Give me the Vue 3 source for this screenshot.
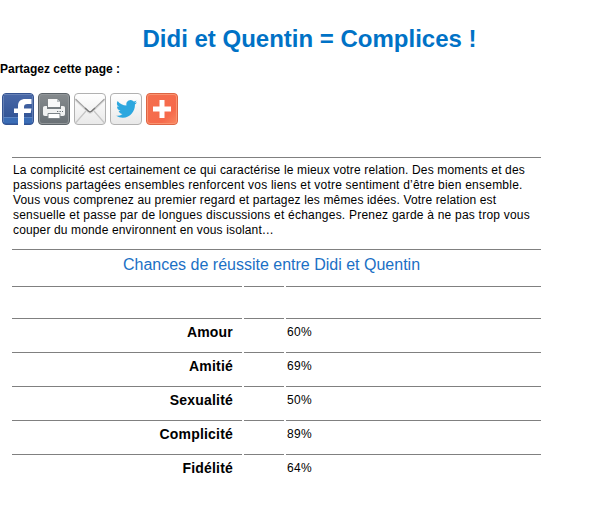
<template>
  <div class="page">
    <h1 class="title">Didi et Quentin = Complices !</h1>

    <p class="share-label">Partagez cette page :</p>

    <div class="share-list">
      <!-- Facebook -->
      <a class="share" aria-label="Facebook">
        <svg viewBox="0 0 32 32">
          <defs>
            <linearGradient id="fb" x1="0" y1="0" x2="0" y2="1">
              <stop offset="0" stop-color="#4a69a8" />
              <stop offset="1" stop-color="#2c4f91" />
            </linearGradient>
          </defs>
          <rect x="0.5" y="0.5" width="31" height="31" rx="3.5" fill="url(#fb)" stroke="#345391" />
          <rect x="1.5" y="24" width="29" height="6.5" rx="1" fill="#3a6cb5" />
          <path d="M1.5 24.5H30.5" stroke="#5a83c2" />
          <path d="M2 1.5H30M1.5 3V29M30.5 3V29" stroke="#7890bf" opacity="0.65" fill="none" />
          <path d="M16 32V20H12V15.5H16V13C16 8.6 18.6 6 23.5 6H29.5V11H25.5C23 11 22 12 22 14V15.5H29.5L28.7 20H22V32Z" fill="#fff" />
        </svg>
      </a>

      <!-- Imprimer -->
      <a class="share" aria-label="Imprimer">
        <svg viewBox="0 0 32 32">
          <defs>
            <linearGradient id="print" x1="0" y1="0" x2="0" y2="1">
              <stop offset="0" stop-color="#868b8e" />
              <stop offset="1" stop-color="#686f74" />
            </linearGradient>
          </defs>
          <rect x="0.5" y="0.5" width="31" height="31" rx="3.5" fill="url(#print)" stroke="#5c6368" />
          <rect x="1.5" y="1.5" width="29" height="29" rx="2.5" fill="none" stroke="#92979a" />
          <path d="M10 14V6H19L22 9V14Z" fill="#f8f8f8" />
          <path d="M19 6V9H22" fill="#b8bdc0" />
          <path d="M7 13H9V16H23V13H25C26.5 13 27 13.8 27 15V21C27 22.3 26.4 23 25 23H7C5.6 23 5 22.3 5 21V15C5 13.8 5.7 13 7 13Z" fill="#f1f2f2" />
          <path d="M19 18.5H20.3M21.5 18.5H22.8M24 18.5H25" stroke="#687075" />
          <path d="M10 20.5H22V25.5H10Z" fill="#fff" stroke="#7d8488" />
        </svg>
      </a>

      <!-- Email -->
      <a class="share" aria-label="Email">
        <svg viewBox="0 0 32 32">
          <defs>
            <linearGradient id="mail" x1="0" y1="0" x2="0" y2="1">
              <stop offset="0" stop-color="#fff" />
              <stop offset="1" stop-color="#e9e9e9" />
            </linearGradient>
          </defs>
          <rect x="0.5" y="0.5" width="31" height="31" rx="3.5" fill="url(#mail)" stroke="#b1b1b1" />
          <path d="M1.5 30L12 18M30.5 30L20 18" stroke="#c6c6c6" stroke-width="1.2" />
          <path d="M1.5 7L14.5 19.3Q16 20.5 17.5 19.3L30.5 7" fill="none" stroke="#dedede" stroke-width="2" />
          <path d="M1.5 6L14.5 18.3Q16 19.5 17.5 18.3L30.5 6" fill="none" stroke="#a2a2a2" stroke-width="1.1" />
          <path d="M11 15L14.5 18.3Q16 19.5 17.5 18.3L21 15" fill="none" stroke="#777" stroke-width="1.3" />
        </svg>
      </a>

      <!-- Twitter -->
      <a class="share" aria-label="Twitter">
        <svg viewBox="0 0 32 32">
          <defs>
            <linearGradient id="tw" x1="0" y1="0" x2="0" y2="1">
              <stop offset="0" stop-color="#fff" />
              <stop offset="1" stop-color="#e8e8e8" />
            </linearGradient>
          </defs>
          <rect x="0.5" y="0.5" width="31" height="31" rx="3.5" fill="url(#tw)" stroke="#b1b1b1" />
          <path
            transform="translate(6.2 5) scale(0.87 0.91)"
            d="M23.95 4.57a10 10 0 0 1-2.82.78 4.96 4.96 0 0 0 2.16-2.72 9.9 9.9 0 0 1-3.12 1.19 4.92 4.92 0 0 0-8.39 4.48A13.98 13.98 0 0 1 1.64 3.16a4.9 4.9 0 0 0 1.52 6.57 4.9 4.9 0 0 1-2.23-.61v.06a4.92 4.92 0 0 0 3.95 4.83 5 5 0 0 1-2.21.08 4.94 4.94 0 0 0 4.6 3.42A9.87 9.87 0 0 1 0 19.54a13.94 13.94 0 0 0 7.55 2.21c9.05 0 14-7.5 14-13.98 0-.21 0-.42-.02-.63a9.94 9.94 0 0 0 2.42-2.57z"
            fill="#2ca7df"
          />
        </svg>
      </a>

      <!-- Plus -->
      <a class="share" aria-label="Plus">
        <svg viewBox="0 0 32 32">
          <defs>
            <linearGradient id="plus" x1="0" y1="0" x2="1" y2="1">
              <stop offset="0" stop-color="#f4704f" />
              <stop offset="0.7" stop-color="#f66a4b" />
              <stop offset="1" stop-color="#f98a62" />
            </linearGradient>
          </defs>
          <rect x="0.5" y="0.5" width="31" height="31" rx="3.5" fill="url(#plus)" stroke="#dc6544" />
          <rect x="1.5" y="1.5" width="29" height="29" rx="2.5" fill="none" stroke="#fb9370" />
          <path d="M13.5 7H18.5V13.5H25V18.5H18.5V25H13.5V18.5H7V13.5H13.5Z" fill="#fff" />
        </svg>
      </a>
    </div>

    <div class="results">
      <div class="cell full description">
        <div
          v-for="line in description"
          :key="line.text"
          :style="{ letterSpacing: line.spacing + 'px' }"
        >{{ line.text }}</div>
      </div>
      <div class="cell full subtitle">Chances de réussite entre Didi et Quentin</div>
      <div class="cell"></div>
      <div class="cell"></div>
      <div class="cell"></div>
      <template v-for="score in scores" :key="score.label">
        <div class="cell label">{{ score.label }}</div>
        <div class="cell"></div>
        <div class="cell value">{{ score.value }}%</div>
      </template>
    </div>
  </div>
</template>

<script setup>
const description = [
  { text: 'La complicité est certainement ce qui caractérise le mieux votre relation. Des moments et des', spacing: 0.162 },
  { text: 'passions partagées ensembles renforcent vos liens et votre sentiment d’être bien ensemble.', spacing: 0.222 },
  { text: 'Vous vous comprenez au premier regard et partagez les mêmes idées. Votre relation est', spacing: 0.153 },
  { text: 'sensuelle et passe par de longues discussions et échanges. Prenez garde à ne pas trop vous', spacing: 0.222 },
  { text: 'couper du monde environnent en vous isolant…', spacing: 0.14 },
]

const scores = [
  { label: 'Amour', value: 60 },
  { label: 'Amitié', value: 69 },
  { label: 'Sexualité', value: 50 },
  { label: 'Complicité', value: 89 },
  { label: 'Fidélité', value: 64 },
]
</script>

<style>
body {
  background: #fff;
}
</style>

<style scoped>
.page {
  height: 507px;
  overflow: hidden;
  font-family: Arial, "Liberation Sans", sans-serif;
  font-size: 12px;
  color: #000;
}

.title {
  margin: 0;
  padding: 24px 0 0 20px;
  font-size: 24px;
  line-height: 30px;
  text-align: center;
  color: #0072c6;
}

.share-label {
  margin: 7px 0 0;
  font-weight: bold;
  line-height: 16px;
}

.share-list {
  display: flex;
  gap: 4px;
  padding: 16px 2px 0;
}

.share,
.share svg {
  display: block;
  width: 32px;
  height: 32px;
}

.results {
  display: grid;
  grid-template-columns: 230px 40px 255px;
  grid-template-rows: 90px 35px 30px repeat(5, 32px);
  gap: 2px;
  margin: 32px 0 0 12px;
}

.cell {
  border-top: 1px solid #808080;
}

.full {
  grid-column: 1 / -1;
}

.description {
  padding: 5px 1px 0;
  line-height: 15px;
  white-space: nowrap;
}

.subtitle {
  padding: 5px 10px 0 0;
  font-size: 16px;
  line-height: 20px;
  text-align: center;
  color: #1b70c5;
}

.label {
  padding: 4px 9px 0 0;
  font-size: 14px;
  font-weight: bold;
  line-height: 18px;
  letter-spacing: 0.2px;
  text-align: right;
}

.value {
  padding: 5px 1px 0;
  line-height: 16px;
  letter-spacing: 0.3px;
}
</style>
